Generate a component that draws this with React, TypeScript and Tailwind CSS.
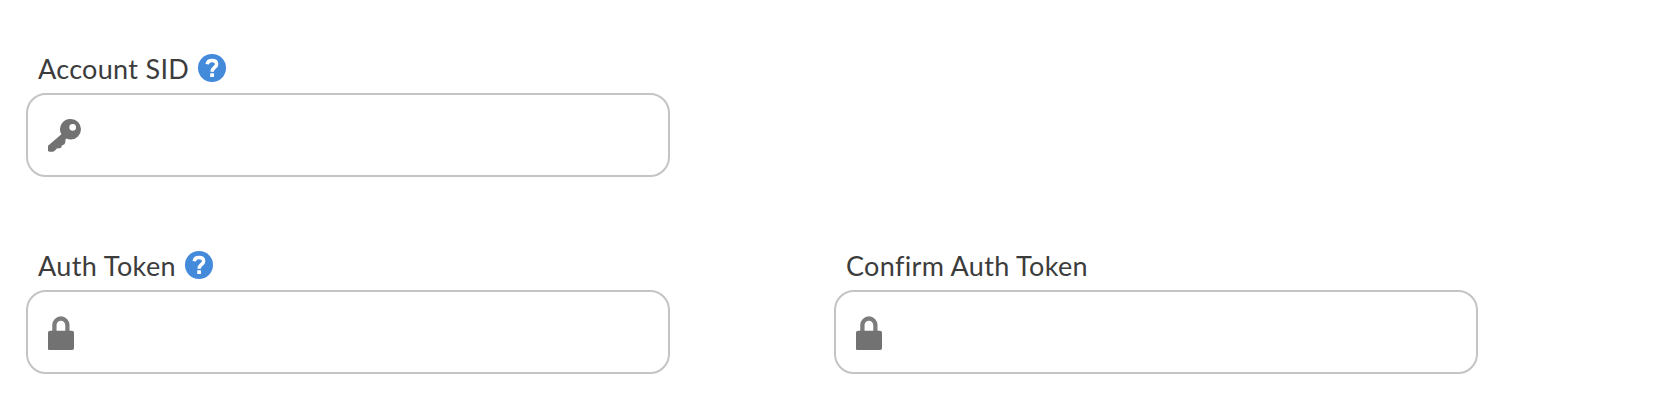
import React from "react";

const KeyIcon = () => (
	<svg width="34" height="34" viewBox="0 0 34 34" fill="#727272" className="blur-[0.6px]">
		<path
			fillRule="evenodd"
			d="M22.8 1a10.2 10.2 0 1 1 0 20.4c-1.6 0-3-.3-4.4-1l-1 1.4c.2 1.600-.2 3.600-1.200 4.700-.8.600-1.800.400-2.300 1-.4.700-.2 1.500-1 2.300-1 .8-2.800.4-3.900.8-1 .5-1.400 2-2.900 2.700-1.500.700-4.300.900-6.100-.3v-5.200l13.400-11.600A10.2 10.2 0 0 1 22.8 1Zm1.900 4.900a3.400 3.400 0 1 0 0 6.800 3.400 3.400 0 0 0 0-6.800Z"
		/>
	</svg>
);

const LockIcon = () => (
	<svg width="26" height="34" viewBox="0 0 26 34" className="mt-0.5 blur-[0.6px]">
		<path d="M6.400 17V9a6.500 6.500 0 0 1 13 0v8" fill="none" stroke="#7c7c7c" strokeWidth="4.300" />
		<path d="M2 14.8h22a2 2 0 0 1 2 2V32a2 2 0 0 1-2 2H1a1 1 0 0 1-1-1V16.8a2 2 0 0 1 2-2Z" fill="#727272" />
	</svg>
);

const HelpIcon = () => (
	<svg width="28" height="28" viewBox="0 0 28 28" className="shrink-0">
		<circle cx="14" cy="14" r="14" fill="#438adb" />
		<path d="M9.2 10.3C9.5 7.800 11.300 6.600 14 6.600c2.800 0 4.600 1.400 4.600 3.600 0 3.200-4.500 3.400-4.500 7.500" fill="none" stroke="#fff" strokeWidth="3.5" />
		<rect x="12.2" y="19.3" width="3.800" height="3.700" rx=".5" fill="#fff" />
	</svg>
);

interface FieldProps {
	id: string;
	label: string;
	labelClassName: string;
	icon: React.ReactNode;
	help?: boolean;
}

const Field: React.FC<FieldProps> = ({ id, label, labelClassName, icon, help }) => {
	return (
		<div className="w-[644px]">
			<div className="mb-[11px] flex h-7 items-center pl-3">
				<label
					htmlFor={id}
					className={`shrink-0 whitespace-nowrap pt-0.5 text-[27px] leading-7 text-[#3c3c3c] ${labelClassName}`}
				>
					{label}
				</label>
				{help && <HelpIcon />}
			</div>
			<div className="flex h-[84px] items-center gap-3 rounded-[20px] border-2 border-[#c4c4c4] bg-white px-5">
				{icon}
				<input id={id} type="text" className="min-w-0 flex-1 bg-transparent text-2xl outline-none" />
			</div>
		</div>
	);
};

const App = () => {
	return (
		<form className="grid h-[418px] grid-cols-[644px_644px] content-start gap-x-[164px] gap-y-[74px] bg-white pl-[26px] pt-[54px] font-['Lato',sans-serif]">
			<Field id="account-sid" label="Account SID" labelClassName="w-[160px] tracking-[0.3px]" icon={<KeyIcon />} help />
			<div />
			<Field id="auth-token" label="Auth Token" labelClassName="w-[147px] tracking-[0.4px]" icon={<LockIcon />} help />
			<Field id="confirm-auth-token" label="Confirm Auth Token" labelClassName="tracking-[0.33px]" icon={<LockIcon />} />
		</form>
	);
};

export default App;
